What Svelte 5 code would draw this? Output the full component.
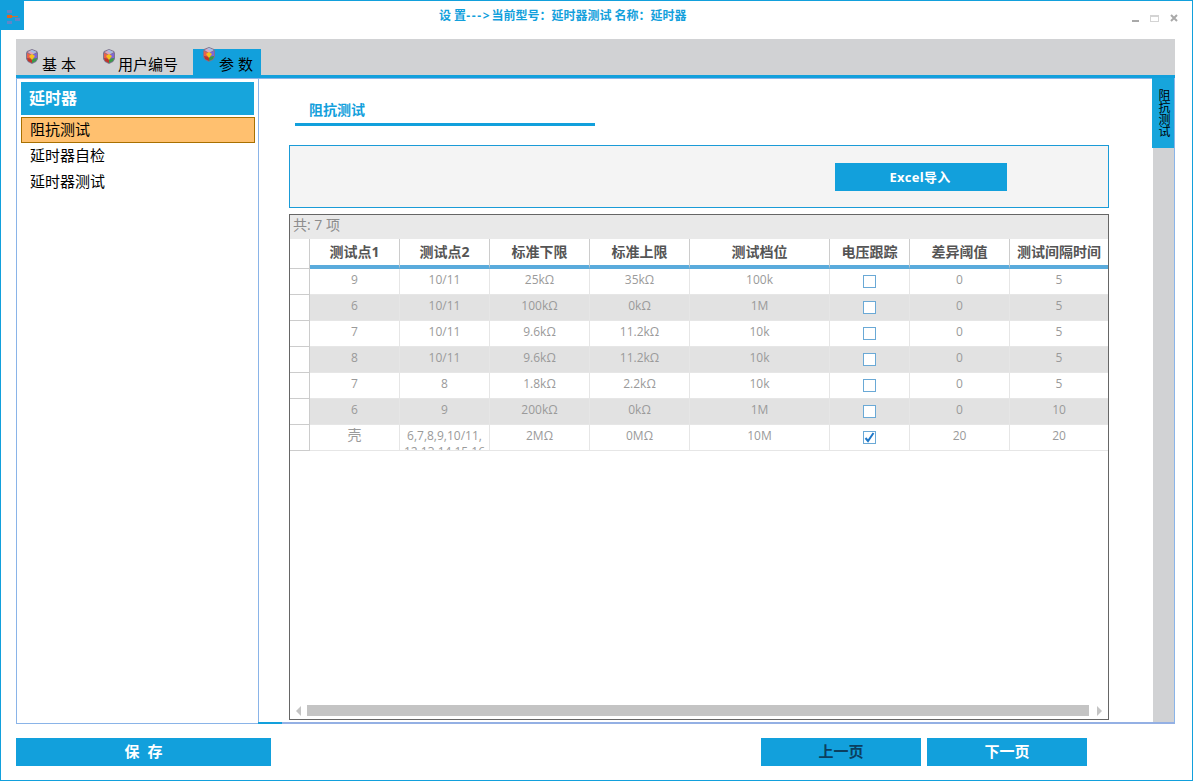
<script>
	const rows = [
		['9', '10/11', '25kΩ', '35kΩ', '100k', false, '0', '5'],
		['6', '10/11', '100kΩ', '0kΩ', '1M', false, '0', '5'],
		['7', '10/11', '9.6kΩ', '11.2kΩ', '10k', false, '0', '5'],
		['8', '10/11', '9.6kΩ', '11.2kΩ', '10k', false, '0', '5'],
		['7', '8', '1.8kΩ', '2.2kΩ', '10k', false, '0', '5'],
		['6', '9', '200kΩ', '0kΩ', '1M', false, '0', '10'],
		['壳', '6,7,8,9,10/11, 12,13,14,15,16', '2MΩ', '0MΩ', '10M', true, '20', '20']
	];
	const columns = ['测试点1', '测试点2', '标准下限', '标准上限', '测试档位', '电压跟踪', '差异阈值', '测试间隔时间'];
	const tabs = [
		{ label: '基 本', width: 77 },
		{ label: '用户编号', width: 100 },
		{ label: '参 数', width: 68, active: true }
	];
	const items = ['阻抗测试', '延时器自检', '延时器测试'];
</script>

{#snippet cube()}
	<svg class="cube" width="14" height="15" viewBox="0 0 14 15">
		<polygon points="7,0 12,2 13,4 13,10 11,13 7,15 3,13 1,10 1,4 2,2" fill="#7d7590" />
		<polygon points="7,1 11.5,3 7,6 2.5,3" fill="#e0a6bc" />
		<polygon points="7,1 11.5,3 9,4.5 5,2" fill="#a3bfe6" />
		<polygon points="2,4 7,6 7,10 2,9" fill="#e8604c" />
		<polygon points="12,4 7,6 7,10 12,9" fill="#7f66d8" />
		<polygon points="2,9 7,10 7,14 3,12" fill="#c0352a" />
		<polygon points="12,9 7,10 7,14 11,12" fill="#3a9a48" />
		<polygon points="7,5 10,7 7,11 4,7" fill="#f5c21c" />
	</svg>
{/snippet}

<div class="window">
	<header class="titlebar">
		<div class="logo">
			<svg width="13" height="14" viewBox="0 0 13 14">
				<rect x="0" y="0" width="5" height="3" fill="#5f86c8" />
				<rect x="0" y="5" width="5" height="3" fill="#e2641e" />
				<rect x="5" y="6" width="6" height="1" fill="#c9703a" />
				<rect x="8" y="8" width="5" height="3" fill="#5f86c8" />
				<rect x="0" y="11" width="5" height="3" fill="#5f86c8" />
			</svg>
		</div>
		<div class="title">设 置<span class="arrow-text">---&gt;</span>当前型号：延时器测试 名称：延时器</div>
		<div class="controls">
			<span class="min"></span>
			<span class="max"></span>
			<svg width="8" height="8" viewBox="0 0 8 8"><path d="M1 1 7 7M7 1 1 7" stroke="#a9a9a9" stroke-width="2" /></svg>
		</div>
	</header>

	<nav class="tabs">
		{#each tabs as tab}
			<div class="tab" class:active={tab.active} style="width: {tab.width}px">
				{@render cube()}
				<span>{tab.label}</span>
			</div>
		{/each}
	</nav>

	<div class="body">
		<aside class="sidebar">
			<div class="sidebar-head">延时器</div>
			{#each items as item, i}
				<div class="item" class:selected={i === 0}>{item}</div>
			{/each}
		</aside>

		<main class="main">
			<div class="content">
				<div class="subtab">阻抗测试</div>
				<div class="toolbox">
					<button class="import">Excel导入</button>
				</div>
				<div class="table">
					<div class="count">共: 7 项</div>
					<div class="row head">
						<div class="cell"></div>
						{#each columns as col}
							<div class="cell">{col}</div>
						{/each}
					</div>
					{#each rows as row}
						<div class="row">
							<div class="cell rowhead"></div>
							{#each row as value}
								<div class="cell" class:big={value === '壳'}>
									{#if typeof value === 'boolean'}
										<span class="check">
											{#if value}
												<svg width="11" height="11" viewBox="0 0 11 11"><path d="M1.5 6 4 9 9.5 1" fill="none" stroke="#1f78c8" stroke-width="2" /></svg>
											{/if}
										</span>
									{:else}
										{value}
									{/if}
								</div>
							{/each}
						</div>
					{/each}
					<div class="scrollbar">
						<span class="arrow left"></span>
						<span class="thumb"></span>
						<span class="arrow right"></span>
					</div>
				</div>
			</div>
			<div class="strip">
				<div class="strip-tab">阻抗测试</div>
			</div>
		</main>
	</div>

	<footer class="footer">
		<button class="btn save">保 存</button>
		<button class="btn prev">上一页</button>
		<button class="btn">下一页</button>
	</footer>
</div>

<style>
	:global(body) {
		margin: 0;
		background: #fff;
	}

	.window {
		box-sizing: border-box;
		width: 1193px;
		height: 781px;
		border: 1px solid #12a0dc;
		display: flex;
		flex-direction: column;
		font-family: "Open Sans", "Noto Sans CJK SC", sans-serif;
		overflow: hidden;
	}

	.titlebar {
		height: 38px;
		flex: none;
		display: flex;
		align-items: flex-start;
	}

	.logo {
		box-sizing: border-box;
		width: 23px;
		height: 29px;
		background: #12a0dc;
		padding: 9px 0 0 6px;
	}

	.logo svg {
		display: block;
	}

	.title {
		margin-left: 415px;
		font-size: 12px;
		font-weight: 700;
		line-height: 30px;
		color: #12a0dc;
		white-space: nowrap;
	}

	.arrow-text {
		letter-spacing: 1.7px;
	}

	.controls {
		margin-left: auto;
		margin-right: 14px;
		margin-top: 13px;
		display: flex;
		align-items: flex-end;
		gap: 11px;
	}

	.min {
		width: 7px;
		height: 2px;
		background: #a9a9a9;
	}

	.max {
		box-sizing: border-box;
		width: 9px;
		height: 7px;
		border: 1px solid #d4d4d4;
		border-top-width: 2px;
	}

	.tabs {
		flex: none;
		margin: 0 17px 0 15px;
		height: 36px;
		background: #d1d2d4;
		border-bottom: 3px solid #12a0dc;
		display: flex;
		align-items: flex-end;
	}

	.tab {
		box-sizing: border-box;
		height: 26px;
		padding-left: 9px;
		display: flex;
		gap: 3px;
		font-size: 15px;
		line-height: 30px;
		color: #000;
		white-space: nowrap;
	}

	.tab:nth-child(2) {
		gap: 2px;
	}

	.tab.active {
		background: #12a0dc;
	}

	.tab.active .cube {
		margin-top: -2px;
	}

	.cube {
		flex: none;
	}

	.body {
		flex: 1;
		min-height: 0;
		margin-left: 15px;
		margin-right: 17px;
		display: flex;
	}

	.sidebar {
		box-sizing: border-box;
		width: 243px;
		flex: none;
		border: 1px solid #8ab4e8;
		padding: 3px 3px 0 4px;
	}

	.sidebar-head {
		width: 233px;
		height: 33px;
		line-height: 32px;
		padding-left: 8px;
		box-sizing: border-box;
		background: #17a5dc;
		color: #fff;
		font-size: 16px;
		font-weight: 700;
		margin-bottom: 2px;
	}

	.item {
		box-sizing: border-box;
		height: 26px;
		line-height: 22px;
		padding-left: 8px;
		font-size: 15px;
		color: #000;
		border: 1px solid transparent;
	}

	.item.selected {
		background: #ffc06f;
		border-color: #a87000;
	}

	.main {
		flex: 1;
		min-width: 0;
		margin-left: -1px;
		position: relative;
		box-sizing: border-box;
		border: 1px solid #8ab4e8;
		border-bottom-width: 2px;
		border-bottom-color: #94b0e4;
		display: flex;
	}

	.main::after {
		content: '';
		position: absolute;
		left: -1px;
		bottom: -2px;
		width: 24px;
		height: 2px;
		background: #12a0dc;
	}

	.content {
		flex: 1;
		min-width: 0;
		padding: 0 44px 2px 30px;
		display: flex;
		flex-direction: column;
	}

	.subtab {
		flex: none;
		box-sizing: border-box;
		margin-left: 6px;
		width: 300px;
		height: 47px;
		padding: 21px 0 0 14px;
		line-height: 20px;
		font-size: 14px;
		font-weight: 700;
		color: #12a0dc;
		border-bottom: 3px solid #12a0dc;
	}

	.toolbox {
		flex: none;
		box-sizing: border-box;
		margin-top: 19px;
		height: 63px;
		background: #f4f4f4;
		border: 1px solid #1a9bd7;
		padding: 17px 0 0 545px;
	}

	.import {
		display: block;
		width: 172px;
		height: 28px;
		border: 0;
		padding: 0 2px 1px 0;
		background: #12a0dc;
		color: #fff;
		letter-spacing: 0.3px;
		font: 700 13px "Open Sans", "Noto Sans CJK SC", sans-serif;
	}

	.table {
		flex: 1;
		min-height: 0;
		margin-top: 6px;
		border: 1px solid #666;
		display: flex;
		flex-direction: column;
	}

	.count {
		flex: none;
		height: 24px;
		line-height: 20px;
		padding-left: 3px;
		background: #e9e9e9;
		color: #8c8c8c;
		font-size: 14px;
	}

	.row {
		flex: none;
		display: grid;
		grid-template-columns: 20px 90px 90px 100px 100px 140px 80px 100px 98px;
		height: 26px;
		font-size: 12px;
		color: #9a9a9a;
		background: #fff;
	}

	.row:nth-child(even) {
		background: #e2e2e2;
	}

	.row:nth-child(even) .rowhead {
		background: #fff;
	}

	.cell {
		box-sizing: border-box;
		overflow: hidden;
		text-align: center;
		padding-top: 3px;
		line-height: 16px;
		border-right: 1px solid #e6e6e6;
		border-bottom: 1px solid #e6e6e6;
	}

	.cell.big {
		font-size: 14px;
		padding-top: 2px;
	}

	.rowhead {
		border-color: #ccc;
	}

	.row.head {
		height: 30px;
		background: #fff;
		font-size: 14px;
		font-weight: 700;
		color: #555;
	}

	.row.head .cell {
		padding-top: 5px;
		border-right-color: #ccc;
		border-bottom: 4px solid #5aabdc;
		white-space: nowrap;
	}

	.row.head .cell:first-child {
		border-bottom: 1px solid #ccc;
	}

	.row > .cell:last-child {
		border-right: 0;
	}

	.check {
		box-sizing: border-box;
		display: block;
		width: 13px;
		height: 13px;
		margin: 3px auto 0;
		border: 1px solid #6aa9d6;
		background: #fff;
	}

	.check svg {
		display: block;
	}

	.scrollbar {
		flex: none;
		margin: auto 0 3px;
		height: 11px;
		display: flex;
		align-items: center;
		padding: 0 6px;
	}

	.thumb {
		width: 782px;
		height: 11px;
		margin: 0 8px 0 6px;
		background: #c4c4c4;
	}

	.arrow {
		width: 0;
		height: 0;
		border-top: 5px solid transparent;
		border-bottom: 5px solid transparent;
	}

	.arrow.left {
		border-right: 5px solid #c4c4c4;
	}

	.arrow.right {
		border-left: 5px solid #c4c4c4;
	}

	.strip {
		flex: none;
		width: 21px;
		background: #d1d2d4;
		position: relative;
	}

	.strip-tab {
		box-sizing: border-box;
		position: absolute;
		top: -1px;
		left: -1px;
		width: 22px;
		height: 70px;
		background: #17a5dc;
		color: #000;
		font-size: 12px;
		writing-mode: vertical-rl;
		text-align: center;
		line-height: 21px;
	}

	.footer {
		flex: none;
		height: 56px;
		box-sizing: border-box;
		padding: 14px 105px 14px 15px;
		display: flex;
		gap: 6px;
	}

	.btn {
		width: 160px;
		height: 28px;
		border: 0;
		padding: 0 0 3px;
		background: #12a0dc;
		color: #fff;
		font: 700 15px "Open Sans", "Noto Sans CJK SC", sans-serif;
	}

	.btn.prev {
		color: #0b3f5f;
	}

	.btn.save {
		width: 255px;
		margin-right: auto;
		word-spacing: 4px;
	}
</style>
